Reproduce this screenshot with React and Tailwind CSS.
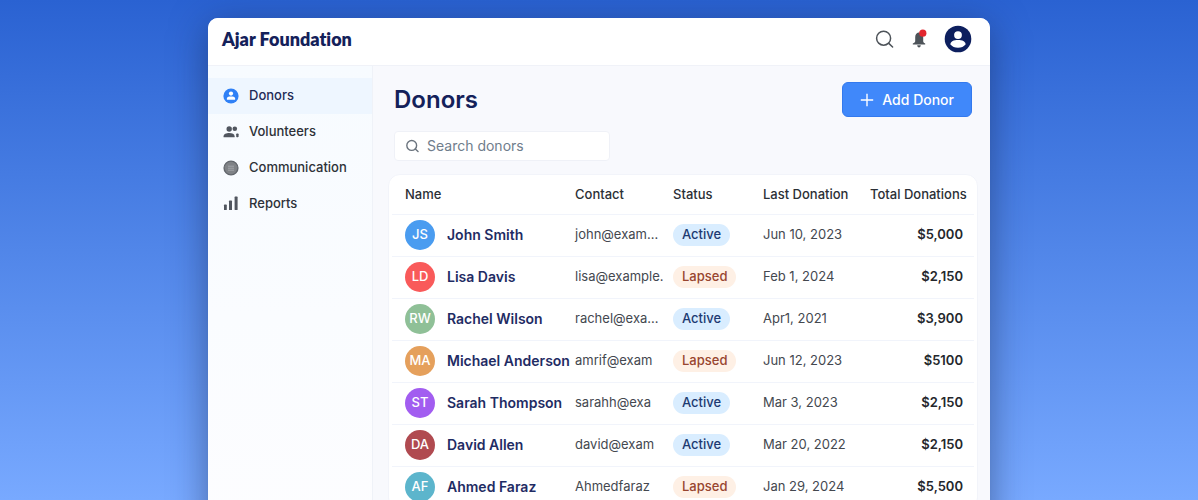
import { useState } from "react";
import clsx from "clsx";

const navItems = [
  { label: "Donors", icon: DonorIcon },
  { label: "Volunteers", icon: VolunteersIcon },
  { label: "Communication", icon: CommunicationIcon },
  { label: "Reports", icon: ReportsIcon },
];

const donors = [
  { initials: "JS", color: "bg-[#4a9cf0]", name: "John Smith", contact: "john@exam…", status: "Active", last: "Jun 10, 2023", total: "$5,000" },
  { initials: "LD", color: "bg-[#f95a5a]", name: "Lisa Davis", contact: "lisa@example.", status: "Lapsed", last: "Feb 1, 2024", total: "$2,150" },
  { initials: "RW", color: "bg-[#8fc097]", name: "Rachel Wilson", contact: "rachel@exa…", status: "Active", last: "Apr1, 2021", total: "$3,900" },
  { initials: "MA", color: "bg-[#e5a05c]", name: "Michael Anderson", contact: "amrif@exam", status: "Lapsed", last: "Jun 12, 2023", total: "$5100" },
  { initials: "ST", color: "bg-[#a25df0]", name: "Sarah Thompson", contact: "sarahh@exa", status: "Active", last: "Mar 3, 2023", total: "$2,150" },
  { initials: "DA", color: "bg-[#b04a50]", name: "David Allen", contact: "david@exam", status: "Active", last: "Mar 20, 2022", total: "$2,150" },
  { initials: "AF", color: "bg-[#5cb5cc]", name: "Ahmed Faraz", contact: "Ahmedfaraz", status: "Lapsed", last: "Jan 29, 2024", total: "$5,500" },
];

function DonorIcon() {
  return (
    <svg viewBox="0 0 16 16" className="h-4 w-4">
      <circle cx="8" cy="8" r="7.6" fill="#2f80f6" />
      <circle cx="8" cy="5.6" r="2.1" fill="#fff" />
      <path d="M3.9 11.8V10.6c0-1.3 1.2-2.2 2.5-2.2h3.2c1.3 0 2.5.9 2.5 2.2v1.2z" fill="#fff" />
    </svg>
  );
}

function VolunteersIcon() {
  return (
    <svg viewBox="0 0 16 16" className="h-4 w-4" fill="#51565f">
      <circle cx="6.2" cy="5" r="2.7" />
      <path d="M.6 13.2v-1C.6 10 3.2 8.9 6.2 8.9s5.4 1.1 5.4 3.3v1z" />
      <circle cx="11.8" cy="4.8" r="2.3" />
      <rect x="13.2" y="9.4" width="2.4" height="3.8" rx="0.8" />
    </svg>
  );
}

function CommunicationIcon() {
  return (
    <svg viewBox="0 0 16 16" className="h-4 w-4">
      <circle cx="8" cy="8" r="6.9" fill="#7f8286" stroke="#62666c" strokeWidth="1.4" />
      <path d="M5 6.2h6M5 8.2h6M5 10.2h6" stroke="#a3a6aa" strokeWidth="1" />
    </svg>
  );
}

function ReportsIcon() {
  return (
    <svg viewBox="0 0 16 16" className="h-4 w-4" fill="#51565f">
      <rect x="1" y="8.6" width="2.8" height="5.4" rx="0.6" />
      <rect x="6" y="4.6" width="3" height="9.4" rx="0.6" />
      <rect x="11.6" y="0.6" width="3" height="13.4" rx="0.6" />
    </svg>
  );
}

function SearchIcon({ className }) {
  return (
    <svg viewBox="0 0 20 20" className={className} fill="none" stroke="currentColor">
      <circle cx="9.6" cy="9.2" r="7" />
      <path d="M14.8 14.4l3.8 3.6" strokeLinecap="round" />
    </svg>
  );
}

function BellIcon() {
  return (
    <svg viewBox="0 0 18 20" className="h-5 w-[18px]">
      <path
        d="M8.6 3.4C6.2 3.9 5.2 5.8 5.2 8.2v4c0 .9-.8 1.5-2.4 2.2v1h12.4v-1c-1.4-.7-2-1.3-2-2.2v-4c0-2.4-1.2-4.3-3.4-4.8z"
        fill="#4d5359"
      />
      <path d="M7.2 16.2h3.6c-.2 1.3-.9 2.3-1.8 2.3s-1.6-1-1.8-2.3z" fill="#4d5359" />
      <circle cx="12.8" cy="4.2" r="3.6" fill="#e3262e" />
    </svg>
  );
}

function ProfileIcon() {
  return (
    <svg viewBox="0 0 28 28" className="h-7 w-7">
      <circle cx="14" cy="14" r="13.3" fill="#0d1f5e" />
      <circle cx="14" cy="10.1" r="3.9" fill="#fff" />
      <path d="M6.4 19.4c0-2.8 3.4-4.3 7.6-4.3s7.6 1.5 7.6 4.3c-1.7 2-4.4 3.3-7.6 3.3s-5.9-1.3-7.6-3.3z" fill="#fff" />
    </svg>
  );
}

function StatusBadge({ status }) {
  return (
    <span
      className={clsx(
        "inline-flex h-[22px] items-center rounded-full px-[9px] text-[13px] font-medium",
        status === "Active" ? "bg-[#d9edff] text-[#1d3a72]" : "bg-[#fef0e5] text-[#98452f]"
      )}
    >
      {status}
    </span>
  );
}

function Header() {
  return (
    <header className="flex h-12 items-center justify-between border-b border-[#f0f2f8] bg-white pr-[18px] pl-[14px]">
      <span className="pb-[6px] font-['Lato',sans-serif] text-lg font-extrabold text-[#14215a] [font-variant-ligatures:none]">
        Ajar Foundation
      </span>
      <div className="flex items-center gap-4 pb-[6px]">
        <button type="button" aria-label="Search" className="text-[#4d5359]">
          <SearchIcon className="h-5 w-5 stroke-[1.5]" />
        </button>
        <button type="button" aria-label="Notifications">
          <BellIcon />
        </button>
        <button type="button" aria-label="Profile">
          <ProfileIcon />
        </button>
      </div>
    </header>
  );
}

function Sidebar() {
  return (
    <nav className="w-[165px] shrink-0 border-r border-[#eff2f8] bg-linear-to-b from-[#f7fbff] to-[#fdfdff] pt-3">
      {navItems.map(({ label, icon: Icon }, i) => (
        <a
          key={label}
          href="#"
          className={clsx(
            "flex h-9 items-center gap-[10px] pl-[15px] text-[13px] font-medium",
            i === 0 ? "bg-[#eef6ff] text-[#1f2a56]" : "text-[#2d3138]"
          )}
        >
          <Icon />
          {label}
        </a>
      ))}
    </nav>
  );
}

function DonorTable({ rows }) {
  return (
    <div className="overflow-hidden rounded-xl border border-[#f2f4fa] bg-white px-[3px]">
      <table className="w-full table-fixed text-left text-[13px]">
        <colgroup>
          <col />
          <col className="w-[98px]" />
          <col className="w-[90px]" />
          <col className="w-[107px]" />
          <col className="w-[104px]" />
        </colgroup>
        <thead>
          <tr className="h-[39px] border-b border-[#f1f4fb] text-[#2b2f36]">
            <th className="pl-[13px] font-medium">Name</th>
            <th className="font-medium">Contact</th>
            <th className="font-medium">Status</th>
            <th className="font-medium">Last Donation</th>
            <th className="font-medium whitespace-nowrap">Total Donations</th>
          </tr>
        </thead>
        <tbody>
          {rows.map((d) => (
            <tr key={d.name} className="h-[42px] border-b border-[#f1f4fb] text-[#44484f]">
              <td className="pl-[13px]">
                <div className="flex items-center gap-3">
                  <span
                    className={clsx(
                      "flex h-[30px] w-[30px] shrink-0 items-center justify-center rounded-full text-[13px] font-medium text-white",
                      d.color
                    )}
                  >
                    {d.initials}
                  </span>
                  <span className="text-sm font-semibold whitespace-nowrap text-[#1f2c64]">{d.name}</span>
                </div>
              </td>
              <td>{d.contact}</td>
              <td>
                <StatusBadge status={d.status} />
              </td>
              <td>{d.last}</td>
              <td className="pr-[11px] text-right font-semibold text-[#24272c]">{d.total}</td>
            </tr>
          ))}
        </tbody>
      </table>
    </div>
  );
}

export default function App() {
  const [query, setQuery] = useState("");
  const rows = donors.filter((d) => d.name.toLowerCase().includes(query.toLowerCase()));

  return (
    <div className="h-screen overflow-hidden bg-linear-to-b from-[#2a62d2] to-[#78a9ff] pt-[18px] font-['Inter',sans-serif]">
      <div className="mx-auto max-w-[782px] overflow-hidden rounded-t-[10px] bg-[#f8f9fd] shadow-[0_8px_36px_rgba(20,35,75,0.5)]">
        <Header />
        <div className="flex min-h-screen">
          <Sidebar />
          <main className="min-w-0 flex-1 pt-4 pr-3 pl-[15px]">
            <div className="flex items-center justify-between pr-[6px] pl-[6px]">
              <h1 className="text-2xl font-semibold text-[#14215a]">Donors</h1>
              <button
                type="button"
                className="flex h-[35px] items-center gap-2 rounded-md border border-[#3379ee] bg-[#4088fa] px-[17px] text-sm font-medium text-white"
              >
                <svg viewBox="0 0 14 14" className="h-[14px] w-[14px]" stroke="currentColor" strokeWidth="1.4">
                  <path d="M7 .8v12.4M.8 7h12.4" />
                </svg>
                Add Donor
              </button>
            </div>
            <label className="mt-[14px] ml-[6px] flex h-[30px] w-[216px] items-center gap-2 rounded border border-[#eff1f7] bg-white px-[10px] text-[#6b747e]">
              <SearchIcon className="h-[14px] w-[14px] shrink-0 stroke-2" />
              <input
                type="text"
                aria-label="Search donors"
                placeholder="Search donors"
                value={query}
                onChange={(e) => setQuery(e.target.value)}
                className="min-w-0 flex-1 text-sm outline-none placeholder:text-[#6f7d8c]"
              />
            </label>
            <div className="mt-[13px]">
              <DonorTable rows={rows} />
            </div>
          </main>
        </div>
      </div>
    </div>
  );
}
